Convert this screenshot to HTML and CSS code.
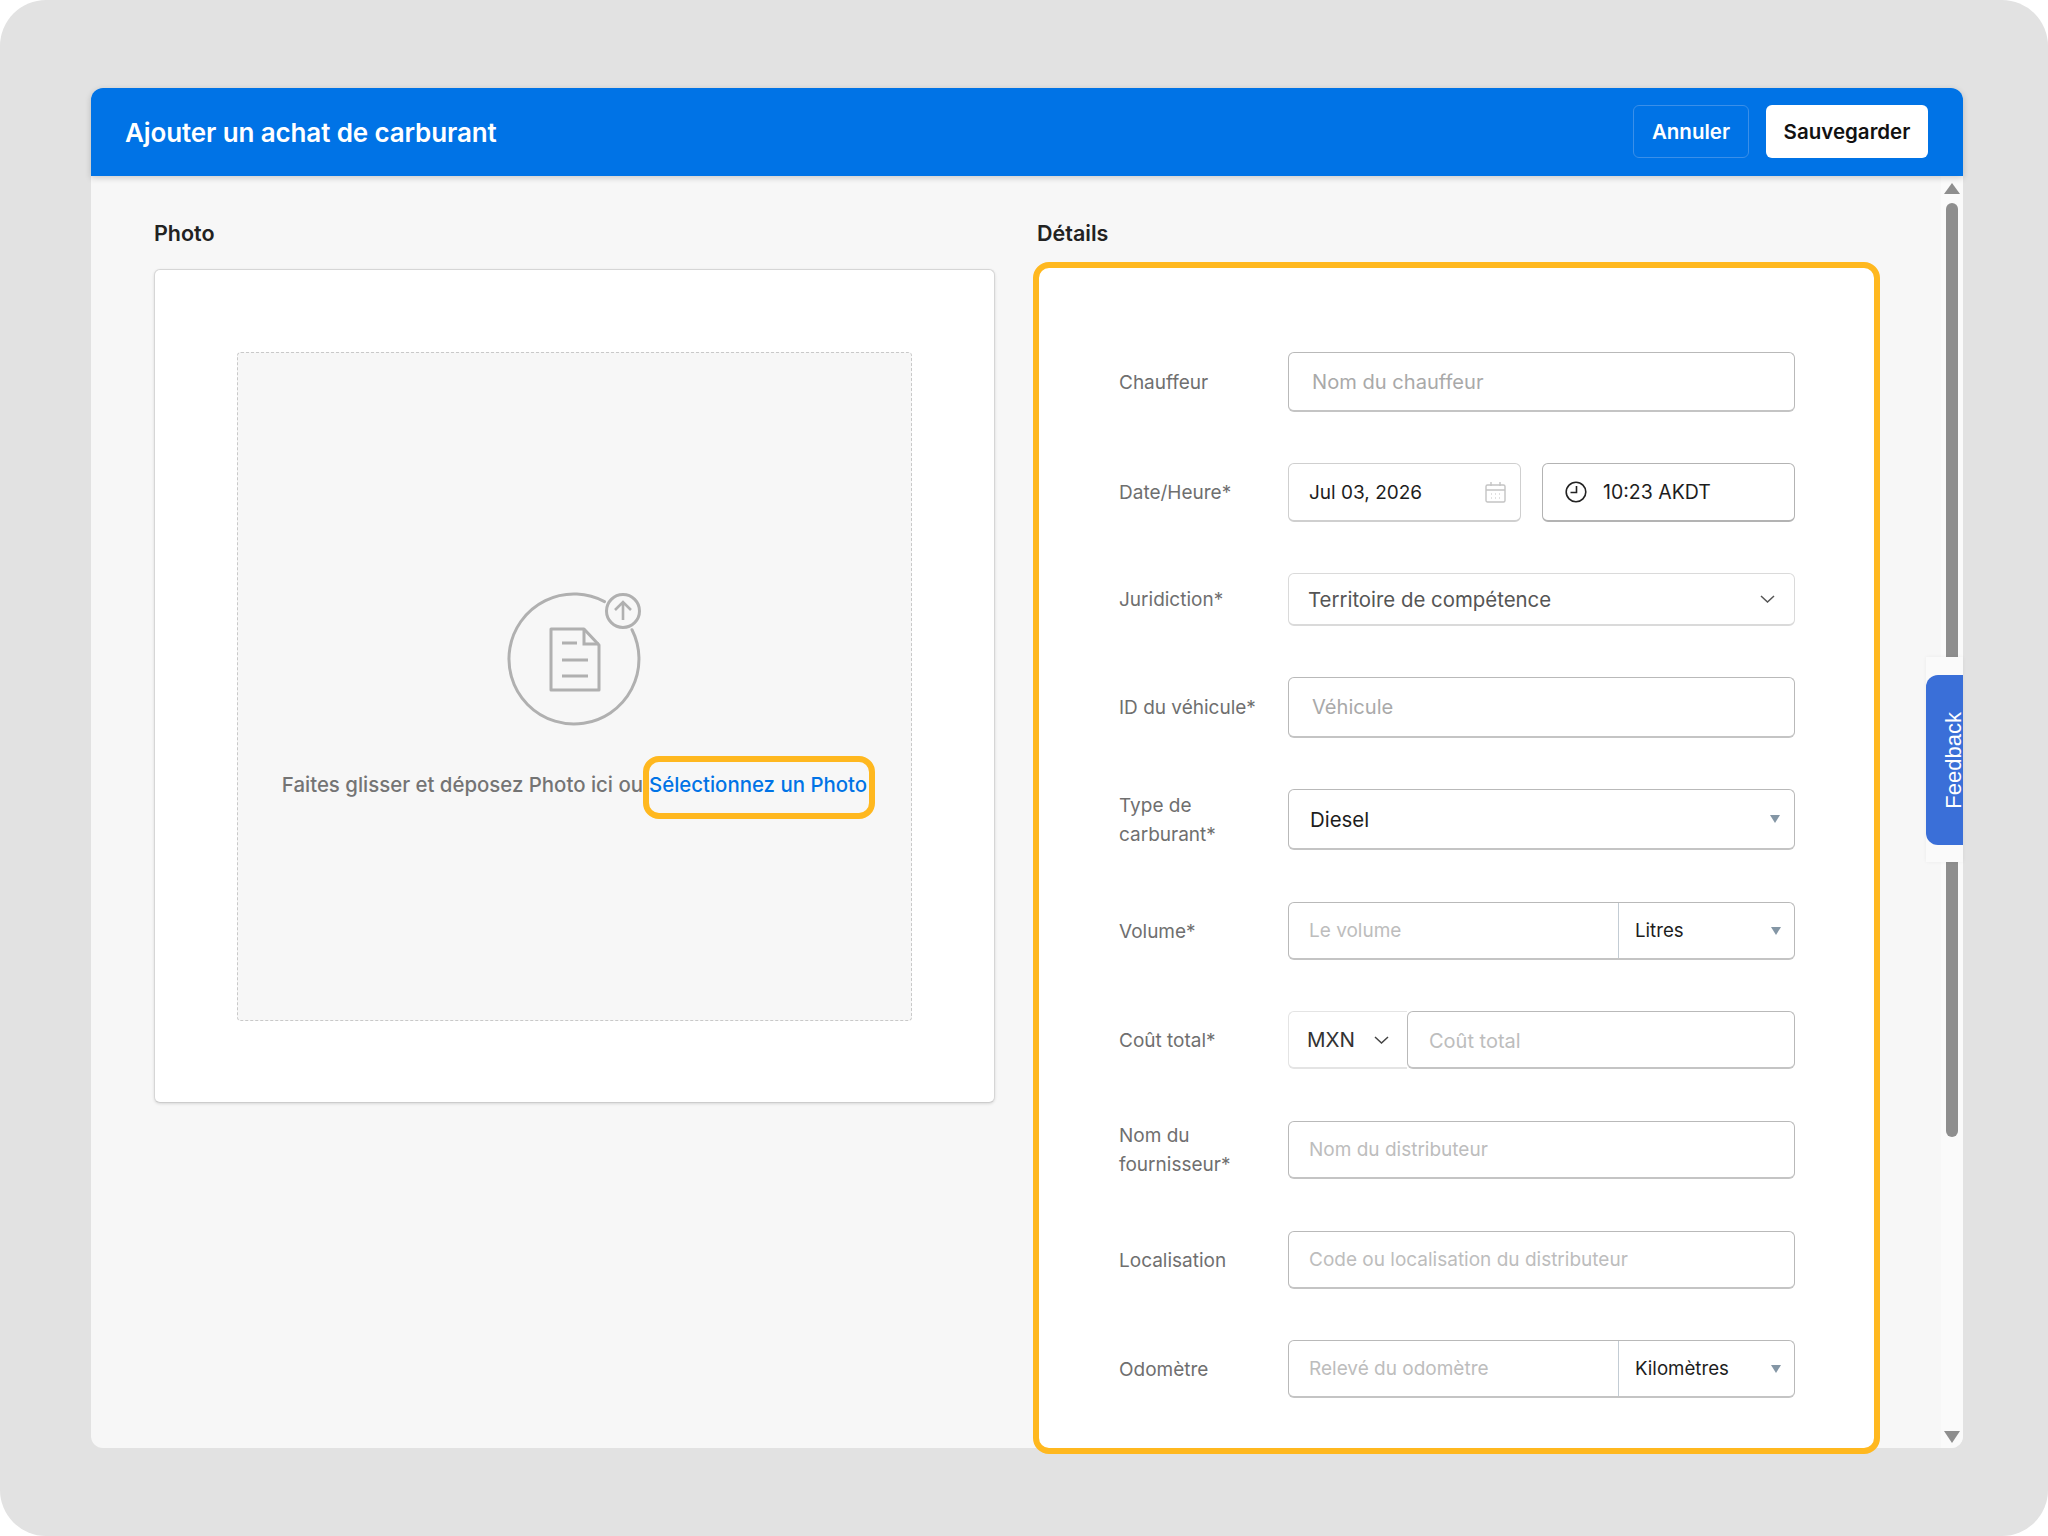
FILE: index.html
```html
<!DOCTYPE html>
<html lang="fr">
<head>
    <meta charset="UTF-8">
    <title>Ajouter un achat de carburant</title>
    <link rel="stylesheet" href="styles.css">
</head>
<body>
    <div class="frame">
        <div class="window">
            <header class="topbar">
                <h1>Ajouter un achat de carburant</h1>
                <div class="topbar-actions">
                    <button class="btn btn-ghost">Annuler</button>
                    <button class="btn btn-white">Sauvegarder</button>
                </div>
            </header>

            <div class="window-body">
                <main class="content">
                    <section class="photo-col">
                        <h2>Photo</h2>
                        <div class="photo-card">
                            <div class="dropzone">
                                <svg class="upload-icon" width="140" height="140" viewBox="0 0 140 140" fill="none" stroke="#b0b0b0" stroke-width="3">
                                    <path d="M100.5 12.6A65 65 0 1 0 128 40.7" stroke-linecap="round"/>
                                    <circle cx="119" cy="22" r="16.5"/>
                                    <path d="M119 31V13M111 21l8-8 8 8" stroke-width="2.6"/>
                                    <path d="M47 40H80L95 56V101H47Z" stroke-linejoin="round"/>
                                    <path d="M80 40V55H95"/>
                                    <path d="M58 54H73M58 71H84M58 87H84"/>
                                </svg>
                                <p class="drop-text">
                                    <span>Faites glisser et déposez Photo ici ou</span>
                                    <a href="#" class="drop-link">Sélectionnez un Photo</a>
                                </p>
                            </div>
                        </div>
                    </section>

                    <section class="details-col">
                        <h2>Détails</h2>
                        <div class="details-card">
                            <div class="form-row">
                                <label>Chauffeur</label>
                                <div class="field field-tall field-first"><span class="ph ph-lg">Nom du chauffeur</span></div>
                            </div>

                            <div class="form-row">
                                <label>Date/Heure*</label>
                                <div class="split">
                                    <div class="field field-date">
                                        <span class="val">Jul 03, 2026</span>
                                        <svg width="21" height="21" viewBox="0 0 21 21" fill="none" stroke="#c4c4c4" stroke-width="1.4">
                                            <rect x="1" y="3" width="19" height="17" rx="1.5"/>
                                            <path d="M1 8H20M6 0V4M15 0V4"/>
                                            <path d="M6 12h1M10 12h1M14 12h1M6 16h1M10 16h1M14 16h1" stroke-width="1.2"/>
                                        </svg>
                                    </div>
                                    <div class="field field-time">
                                        <svg width="22" height="22" viewBox="0 0 22 22" fill="none" stroke="#222" stroke-width="1.6">
                                            <circle cx="11" cy="11" r="9.8"/>
                                            <path d="M11.5 5V11.5H5.5"/>
                                        </svg>
                                        <span class="val val-time">10:23 AKDT</span>
                                    </div>
                                </div>
                            </div>

                            <div class="form-row">
                                <label>Juridiction*</label>
                                <div class="field field-select">
                                    <span class="val-muted">Territoire de compétence</span>
                                    <svg width="15" height="8" viewBox="0 0 15 8" fill="none" stroke="#555" stroke-width="1.5"><path d="M1 1l6.5 6L14 1"/></svg>
                                </div>
                            </div>

                            <div class="form-row">
                                <label>ID du véhicule*</label>
                                <div class="field field-tall"><span class="ph ph-lg">Véhicule</span></div>
                            </div>

                            <div class="form-row">
                                <label>Type de<br>carburant*</label>
                                <div class="field field-tall field-diesel">
                                    <span class="val-lg">Diesel</span>
                                    <i class="caret"></i>
                                </div>
                            </div>

                            <div class="form-row form-row-wide">
                                <label>Volume*</label>
                                <div class="field field-unit">
                                    <div class="unit-input"><span class="ph">Le volume</span></div>
                                    <div class="unit-select"><span class="val-unit">Litres</span><i class="caret"></i></div>
                                </div>
                            </div>

                            <div class="form-row">
                                <label>Coût total*</label>
                                <div class="money">
                                    <div class="currency">
                                        <span class="val-cur">MXN</span>
                                        <svg width="15" height="8" viewBox="0 0 15 8" fill="none" stroke="#444" stroke-width="1.5"><path d="M1 1l6.5 6L14 1"/></svg>
                                    </div>
                                    <div class="field field-amount"><span class="ph ph-md">Coût total</span></div>
                                </div>
                            </div>

                            <div class="form-row form-row-wide">
                                <label>Nom du<br>fournisseur*</label>
                                <div class="field"><span class="ph">Nom du distributeur</span></div>
                            </div>

                            <div class="form-row form-row-wide">
                                <label>Localisation</label>
                                <div class="field"><span class="ph">Code ou localisation du distributeur</span></div>
                            </div>

                            <div class="form-row">
                                <label>Odomètre</label>
                                <div class="field field-unit">
                                    <div class="unit-input"><span class="ph">Relevé du odomètre</span></div>
                                    <div class="unit-select"><span class="val-unit">Kilomètres</span><i class="caret"></i></div>
                                </div>
                            </div>
                        </div>
                    </section>
                </main>

                <div class="scrollbar">
                    <i class="arrow-up"></i>
                    <div class="thumb"></div>
                    <i class="arrow-down"></i>
                </div>

                <div class="feedback-wrap">
                    <div class="feedback"><span>Feedback</span></div>
                </div>
            </div>
        </div>
    </div>
</body>
</html>
```

FILE: styles.css
```css
* {
    margin: 0;
    padding: 0;
    box-sizing: border-box;
}

html,
body {
    width: 2048px;
    height: 1536px;
    background-color: #fff;
    overflow: hidden;
}

body {
    font-family: Inter, "Liberation Sans", sans-serif;
}

.frame {
    width: 2048px;
    height: 1536px;
    padding: 88px 85px 88px 91px;
    background-color: #e2e2e2;
    border-radius: 46px;
}

.window {
    display: flex;
    flex-direction: column;
    height: 1360px;
    background-color: #f7f7f7;
    border-radius: 12px;
}

/* Header */
.topbar {
    position: relative;
    z-index: 2;
    display: flex;
    align-items: center;
    justify-content: space-between;
    flex-shrink: 0;
    height: 88px;
    padding: 0 35px 0 34px;
    background-color: #0073e6;
    border-radius: 12px 12px 0 0;
    box-shadow: 0 2px 6px rgba(0, 0, 0, 0.18);
}

.topbar h1 {
    font-size: 26px;
    font-weight: 600;
    letter-spacing: -0.12px;
    color: #fff;
}

.topbar-actions {
    display: flex;
    gap: 17px;
    margin-top: -1px;
}

.btn {
    height: 53px;
    font-family: inherit;
    font-size: 20.5px;
    font-weight: 600;
    border-radius: 6px;
}

.btn-ghost {
    width: 116px;
    color: #fff;
    background-color: #0073e6;
    border: 1px solid #3a8fe9;
}

.btn-white {
    width: 162px;
    color: #111;
    background-color: #fff;
    border: none;
}

/* Body */
.window-body {
    position: relative;
    display: flex;
    flex: 1;
    min-height: 0;
}

.content {
    display: flex;
    flex: 1;
    gap: 42px;
    padding: 45px 0 0 63px;
}

h2 {
    height: 24px;
    font-size: 21.5px;
    font-weight: 600;
    line-height: 24px;
    color: #222;
}

.photo-col {
    width: 841px;
}

.photo-card {
    height: 834px;
    margin-top: 24px;
    padding: 82px;
    background-color: #fff;
    border: 1px solid #d6d6d6;
    border-bottom-color: #ccc;
    border-radius: 6px;
    box-shadow: 0 1px 3px rgba(0, 0, 0, 0.12);
}

.dropzone {
    display: flex;
    flex-direction: column;
    align-items: center;
    height: 669px;
    padding-top: 236px;
    background-color: #f7f7f7;
    border: 1px dashed #c9c9c9;
    border-radius: 4px;
}

.upload-icon {
    flex-shrink: 0;
    margin-right: 2px;
}

.drop-text {
    display: flex;
    gap: 6px;
    margin-top: 42px;
    font-size: 20.4px;
    font-weight: 500;
    line-height: 28px;
    color: #747474;
    white-space: nowrap;
}

.drop-link {
    position: relative;
    color: #0073e6;
    text-decoration: none;
}

/* yellow callout round the link */
.drop-link::after {
    content: "";
    position: absolute;
    top: -15px;
    left: -6px;
    right: -8px;
    bottom: -20px;
    border: 6px solid #ffb81f;
    border-radius: 16px;
}

.details-col {
    width: 847px;
    margin-left: -4px;
}

.details-col h2 {
    padding-left: 4px;
}

.details-card {
    display: flex;
    flex-direction: column;
    gap: 51px;
    height: 1192px;
    margin-top: 17px;
    padding: 84px 79px 0 80px;
    background-color: #fff;
    border: 6px solid #ffb81f;
    border-radius: 16px;
}

.form-row {
    display: flex;
    align-items: center;
}

.form-row-wide {
    margin-top: 1px;
}

.form-row label {
    flex-shrink: 0;
    width: 169px;
    font-size: 19px;
    line-height: 29px;
    color: #6f6f6f;
}

.field {
    display: flex;
    align-items: center;
    justify-content: space-between;
    flex: 1;
    height: 58px;
    padding: 0 20px;
    background-color: #fff;
    border: 1px solid #b9b9b9;
    border-bottom: 2px solid #c4c4c4;
    border-radius: 6px;
}

.field-tall {
    height: 61px;
    padding: 0 23px;
}

.field-first {
    height: 60px;
}

.field-select {
    height: 53px;
    padding: 0 19px;
    border: 1px solid #dadada;
    border-bottom-width: 2px;
}

.split {
    display: flex;
    flex: 1;
    gap: 21px;
}

.field-date {
    flex: 0 0 233px;
    height: 59px;
    padding: 0 14px 0 20px;
    border-color: #cfcfcf;
}

.field-time {
    justify-content: flex-start;
    gap: 16px;
    height: 59px;
    padding: 0 0 0 22px;
    border-color: #b3b3b3;
}

.ph {
    font-size: 19px;
    color: #bdbdbd;
}

.ph-lg {
    font-size: 20.1px;
    color: #a9a9a9;
}

.ph-md {
    padding-top: 2px;
    font-size: 20px;
}

.val {
    font-size: 19px;
    color: #1d1d1d;
}

.val-time {
    font-size: 19.5px;
}

.val-muted {
    font-size: 20.4px;
    color: #555;
}

.val-lg {
    font-size: 20.4px;
    color: #1d1d1d;
}

.field-diesel {
    padding: 0 14px 0 21px;
}

.caret {
    display: block;
    width: 0;
    height: 0;
    border-left: 5.5px solid transparent;
    border-right: 5.5px solid transparent;
    border-top: 8px solid #8496a5;
}

.field-unit {
    padding: 0;
}

.unit-input {
    display: flex;
    align-items: center;
    width: 330px;
    height: 100%;
    padding-left: 20px;
    border-right: 1px solid #c3ccd4;
}

.unit-select {
    display: flex;
    align-items: center;
    justify-content: space-between;
    flex: 1;
    height: 100%;
    padding: 0 13px 0 16px;
}

.val-unit {
    font-size: 18.7px;
    color: #1d1d1d;
}

.money {
    display: flex;
    flex: 1;
}

.currency {
    display: flex;
    align-items: center;
    justify-content: space-between;
    width: 119px;
    height: 58px;
    padding: 0 18px;
    border: 1px solid #e4e4e4;
    border-right: none;
    border-bottom-width: 2px;
    border-radius: 6px 0 0 6px;
}

.val-cur {
    font-size: 20.5px;
    color: #333;
}

.field-amount {
    padding: 0 21px;
}

/* Scrollbar */
.scrollbar {
    display: flex;
    flex-direction: column;
    align-items: center;
    flex-shrink: 0;
    width: 22px;
    padding: 7px 0 5px;
    background-color: #fafafa;
    border-radius: 0 0 12px 0;
}

.arrow-up {
    width: 0;
    height: 0;
    border-left: 8px solid transparent;
    border-right: 8px solid transparent;
    border-bottom: 11px solid #8e8e8e;
}

.thumb {
    width: 12px;
    height: 934px;
    margin-top: 9px;
    background-color: #8e8e8e;
    border-radius: 6px;
}

.arrow-down {
    width: 0;
    height: 0;
    margin-top: auto;
    border-left: 8px solid transparent;
    border-right: 8px solid transparent;
    border-top: 12px solid #8e8e8e;
}

/* Feedback tab */
.feedback-wrap {
    position: absolute;
    top: 481px;
    right: 0;
    display: flex;
    align-items: center;
    width: 37px;
    height: 205px;
    background-color: #fafafa;
    box-shadow: 0 0 4px rgba(0, 0, 0, 0.05);
}

.feedback {
    display: flex;
    align-items: center;
    justify-content: flex-end;
    width: 37px;
    height: 170px;
    background-color: #3a6fd8;
    border-radius: 12px 0 0 12px;
}

.feedback span {
    display: block;
    flex-shrink: 0;
    margin-top: 2px;
    font-family: "Liberation Sans", Arial, sans-serif;
    font-size: 22px;
    line-height: 18px;
    color: #fff;
    white-space: nowrap;
    writing-mode: vertical-rl;
    transform: rotate(180deg);
}
```
